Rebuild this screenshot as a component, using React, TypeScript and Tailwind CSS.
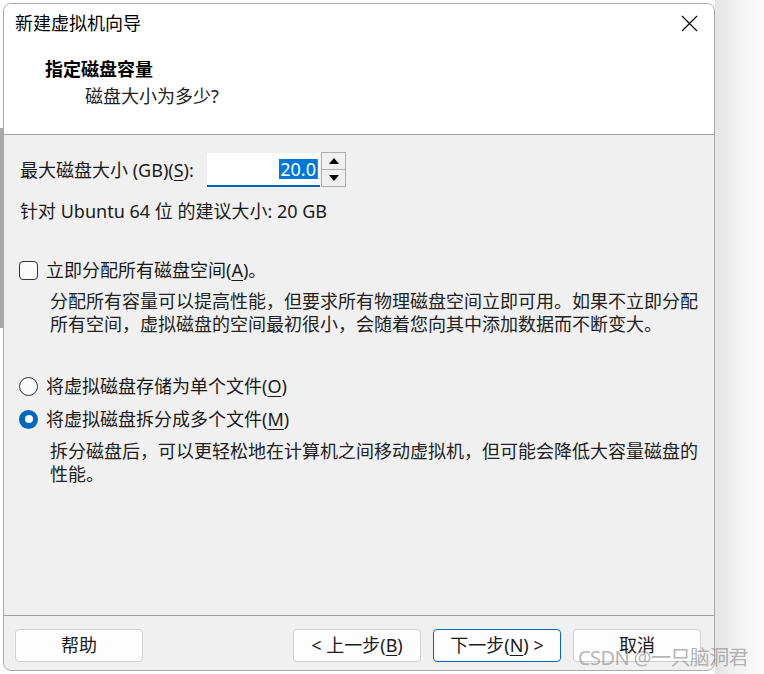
import React from 'react';

const font = { fontFamily: '"Noto Sans", "Noto Sans CJK SC", sans-serif' };

function U({ children }: { children: React.ReactNode }) {
  return <span className="underline underline-offset-[3px] decoration-1">{children}</span>;
}

function Button({ children, primary = false }: { children: React.ReactNode; primary?: boolean }) {
  return (
    <div
      className={`w-[128px] h-[33px] rounded-[4px] bg-[#fdfdfd] flex items-center justify-center text-[18px] text-[#1a1a1a] border
        ${primary ? 'border-[#0067c0]' : 'border-[#d0d0d0]'}
      `}
    >
      {children}
    </div>
  );
}

export default function App() {
  return (
    <div className="relative w-[764px] h-[674px] bg-white overflow-hidden flex" style={font}>
      {/* background app sliver on the left */}
      <div className="w-[3px] flex flex-col">
        <div className="h-[128px]" />
        <div className="h-[200px] bg-[#a8a8a8]" />
      </div>

      {/* wizard window */}
      <div className="mt-[3px] w-[712px] h-[668px] rounded-[8px] border border-[#a9a9a9] overflow-hidden flex flex-col bg-[#f0f0f0] text-[#1a1a1a]">
        {/* header */}
        <div className="h-[131px] bg-white border-b border-[#a0a0a0] flex flex-col">
          <div className="h-[38px] flex items-center justify-between pl-[11px] pr-[16px]">
            <span className="text-[18px] text-black">新建虚拟机向导</span>
            <svg width="17" height="17" viewBox="0 0 17 17" fill="none" stroke="#000" strokeWidth="1.2">
              <path d="M1 1 L16 16 M16 1 L1 16" />
            </svg>
          </div>
          <div className="mt-[14px] h-[26px] flex items-center pl-[41px] text-[18px] font-bold text-black">
            指定磁盘容量
          </div>
          <div className="mt-[1px] h-[26px] flex items-center pl-[81px] text-[18px] text-[#222]">
            磁盘大小为多少?
          </div>
        </div>

        {/* body */}
        <div className="flex-1 flex flex-col pl-[16px] text-[18px]">
          <div className="mt-[18px] flex items-center">
            <div className="w-[187px] flex items-center">
              最大磁盘大小&nbsp;(GB)(<U>S</U>):
            </div>
            <div className="w-[113px] h-[34px] bg-white border-b-2 border-[#0067c0] flex items-center justify-end pr-[2px]">
              <span className="bg-[#0078d7] text-white leading-[20px] px-[1px]">20.0</span>
              <span className="w-[1px] h-[20px] bg-[#e06000]" />
            </div>
            <div className="ml-[1px] w-[25px] h-[35px] -mt-[1px] flex flex-col border border-[#adadad] bg-[#f0f0f0]">
              <div className="flex-1 flex items-center justify-center border-b border-[#adadad]">
                <svg width="10" height="6" viewBox="0 0 10 6"><path d="M0 6 L5 0 L10 6 Z" fill="#000" /></svg>
              </div>
              <div className="flex-1 flex items-center justify-center">
                <svg width="10" height="6" viewBox="0 0 10 6"><path d="M0 0 L5 6 L10 0 Z" fill="#000" /></svg>
              </div>
            </div>
          </div>

          <div className="mt-[12px] h-[24px] flex items-center">针对 Ubuntu 64 位 的建议大小: 20 GB</div>

          <div className="mt-[35px] h-[24px] flex items-center gap-[8px] -ml-[1px]">
            <div className="w-[19px] h-[19px] rounded-[4px] border border-[#333] bg-[#fafafa]" />
            <span>立即分配所有磁盘空间(<U>A</U>)。</span>
          </div>
          <div className="mt-[8px] pl-[30px] leading-[23px] text-[#222]">
            分配所有容量可以提高性能，但要求所有物理磁盘空间立即可用。如果不立即分配
            <br />
            所有空间，虚拟磁盘的空间最初很小，会随着您向其中添加数据而不断变大。
          </div>

          <div className="mt-[38px] h-[24px] flex items-center gap-[8px] -ml-[1px]">
            <div className="w-[19px] h-[19px] rounded-full border border-[#333] bg-[#fafafa]" />
            <span>将虚拟磁盘存储为单个文件(<U>O</U>)</span>
          </div>
          <div className="mt-[9px] h-[24px] flex items-center gap-[8px] -ml-[1px]">
            <div className="w-[19px] h-[19px] rounded-full bg-[#0067c0] flex items-center justify-center">
              <div className="w-[8px] h-[8px] rounded-full bg-white" />
            </div>
            <span>将虚拟磁盘拆分成多个文件(<U>M</U>)</span>
          </div>
          <div className="mt-[9px] pl-[30px] leading-[23px] text-[#222]">
            拆分磁盘后，可以更轻松地在计算机之间移动虚拟机，但可能会降低大容量磁盘的
            <br />
            性能。
          </div>
        </div>

        {/* footer */}
        <div className="h-[55px] border-t border-[#a0a0a0] flex pt-[13px] pl-[11px]">
          <Button>帮助</Button>
          <div className="ml-[150px] flex gap-[12px]">
            <Button>&lt; 上一步(<U>B</U>)</Button>
            <Button primary>下一步(<U>N</U>) &gt;</Button>
            <Button>取消</Button>
          </div>
        </div>
      </div>

      {/* shadow on the right */}
      <div className="flex-1 bg-gradient-to-r from-[#e4e4e4] via-[#f3f3f3] to-[#fbfbfb]" />

      {/* watermark */}
      <div className="absolute left-[578px] top-[643px] text-[20px] text-[rgba(120,120,120,0.55)] tracking-[-0.6px]">
        CSDN @一只脑洞君
      </div>
    </div>
  );
}
